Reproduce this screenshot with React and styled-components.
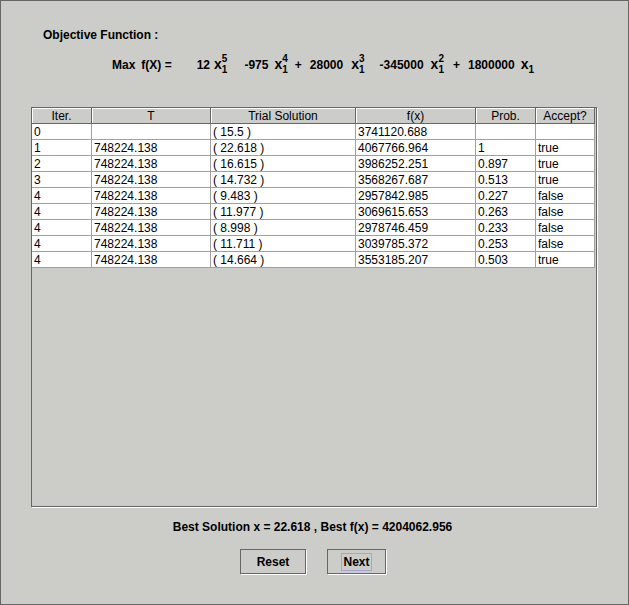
import React from "react";
import styled, { createGlobalStyle } from "styled-components";

const BG = "#cccdc9";
const DARK = "#666666";

const Global = createGlobalStyle`
  html, body { margin: 0; padding: 0; background: ${BG}; }
  body { font-family: "Liberation Sans", Arial, sans-serif; }
`;

const Frame = styled.div`
  width: 629px;
  height: 605px;
  box-sizing: border-box;
  border: 1px solid ${DARK};
  background: ${BG};
  color: #000;
  font-family: "Liberation Sans", Arial, sans-serif;
  display: flex;
  flex-direction: column;
  overflow: hidden;
`;

const Title = styled.div`
  margin: 27px 0 0 42px;
  font-size: 12px;
  font-weight: bold;
  line-height: 14px;
`;

const Formula = styled.div`
  margin-top: 11px;
  font-size: 12px;
  font-weight: bold;
  line-height: 14px;
  white-space: nowrap;
`;

const Chunk = styled.span`
  margin-left: ${(p) => p.$ml}px;
`;

const VarWrap = styled.span`
  margin-left: ${(p) => p.$ml}px;
`;

const X = styled.span`
  font-size: 14px;
`;

const Scripts = styled.span`
  display: inline-block;
  vertical-align: -4px;
  font-size: 10px;
  line-height: 11px;
`;

const Script = styled.span`
  display: block;
  height: 11px;
`;

const Pane = styled.div`
  margin: 32px 0 0 30px;
  width: 566px;
  height: 400px;
  box-sizing: border-box;
  border: 1px solid ${DARK};
  box-shadow: 1px 1px 0 #ffffff;
  background: ${BG};
  overflow: hidden;
`;

const Grid = styled.div`
  width: 563px;
  display: grid;
  grid-template-columns: 60px 119px 145px 120px 60px 59px;
  font-size: 12px;
`;

const HeadCell = styled.div`
  height: 16px;
  box-sizing: border-box;
  background: ${BG};
  border-right: 1px solid ${DARK};
  border-bottom: 1px solid ${DARK};
  box-shadow: inset 1px 1px 0 #ffffff;
  text-align: center;
  padding-top: 1px;
  line-height: 15px;
  white-space: nowrap;
  overflow: hidden;
`;

const Cell = styled.div`
  height: 16px;
  box-sizing: border-box;
  background: #ffffff;
  border-right: 1px solid #a0a0a0;
  border-bottom: 1px solid #a0a0a0;
  padding: 1px 0 0 2px;
  line-height: 15px;
  white-space: nowrap;
  overflow: hidden;
`;

const Best = styled.div`
  margin-top: 13px;
  padding-right: 4px;
  text-align: center;
  font-size: 12px;
  font-weight: bold;
  line-height: 14px;
`;

const ButtonRow = styled.div`
  margin-top: 15px;
  display: flex;
  justify-content: center;
  gap: 21px;
  padding-right: 3px;
`;

const Button = styled.button`
  width: ${(p) => p.$w}px;
  height: 25px;
  box-sizing: border-box;
  border: 1px solid ${DARK};
  box-shadow: 1px 1px 0 #ffffff;
  background: ${BG};
  padding: 0;
  margin: 0;
  font-family: "Liberation Sans", Arial, sans-serif;
  font-size: 12px;
  font-weight: bold;
  color: #000;
  display: flex;
  align-items: center;
  justify-content: center;
  cursor: default;
`;

const Label = styled.span`
  border: 1px solid ${(p) => (p.$focused ? "#a4a4d8" : "transparent")};
  padding: 0 1px;
  line-height: 16px;
`;

const headers = ["Iter.", "T", "Trial Solution", "f(x)", "Prob.", "Accept?"];

const rows = [
  ["0", "", "( 15.5 )", "3741120.688", "", ""],
  ["1", "748224.138", "( 22.618 )", "4067766.964", "1", "true"],
  ["2", "748224.138", "( 16.615 )", "3986252.251", "0.897", "true"],
  ["3", "748224.138", "( 14.732 )", "3568267.687", "0.513", "true"],
  ["4", "748224.138", "( 9.483 )", "2957842.985", "0.227", "false"],
  ["4", "748224.138", "( 11.977 )", "3069615.653", "0.263", "false"],
  ["4", "748224.138", "( 8.998 )", "2978746.459", "0.233", "false"],
  ["4", "748224.138", "( 11.711 )", "3039785.372", "0.253", "false"],
  ["4", "748224.138", "( 14.664 )", "3553185.207", "0.503", "true"],
];

function Var({ ml, sup }) {
  return (
    <VarWrap $ml={ml}>
      <X>x</X>
      <Scripts>
        <Script>{sup || "\u00a0"}</Script>
        <Script>1</Script>
      </Scripts>
    </VarWrap>
  );
}

export default function App() {
  return (
    <>
      <Global />
      <Frame>
        <Title>Objective Function :</Title>
        <Formula>
          <Chunk $ml={111}>Max</Chunk>
          <Chunk $ml={6}>f(X) =</Chunk>
          <Chunk $ml={25}>12</Chunk>
          <Var ml={4} sup="5" />
          <Chunk $ml={17}>-975</Chunk>
          <Var ml={6} sup="4" />
          <Chunk $ml={7}>+</Chunk>
          <Chunk $ml={8}>28000</Chunk>
          <Var ml={8} sup="3" />
          <Chunk $ml={15}>-345000</Chunk>
          <Var ml={7} sup="2" />
          <Chunk $ml={9}>+</Chunk>
          <Chunk $ml={8}>1800000</Chunk>
          <Var ml={6} />
        </Formula>
        <Pane>
          <Grid>
            {headers.map((h) => (
              <HeadCell key={h}>{h}</HeadCell>
            ))}
            {rows.map((r, i) =>
              r.map((c, j) => <Cell key={i + "-" + j}>{c}</Cell>)
            )}
          </Grid>
        </Pane>
        <Best>Best Solution x = 22.618 , Best f(x) = 4204062.956</Best>
        <ButtonRow>
          <Button $w={66}>
            <Label>Reset</Label>
          </Button>
          <Button $w={59}>
            <Label $focused>Next</Label>
          </Button>
        </ButtonRow>
      </Frame>
    </>
  );
}
